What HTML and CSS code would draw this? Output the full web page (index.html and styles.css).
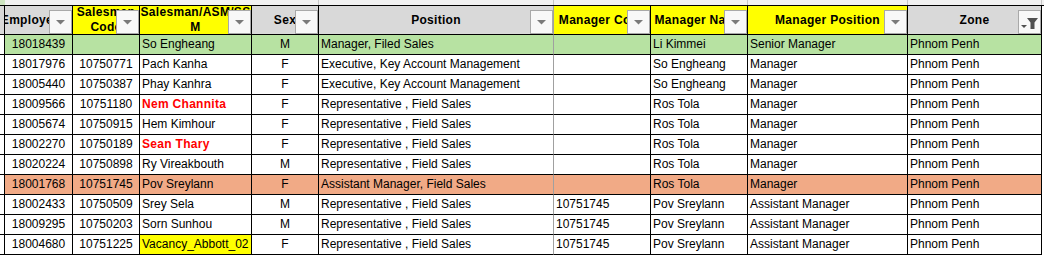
FILE: index.html
```html
<!DOCTYPE html>
<html>
<head>
<meta charset="utf-8">
<link rel="stylesheet" href="styles.css">
</head>
<body>
<div class="sheet">
  <div class="row strip">
    <div class="s s-green"></div><div class="s"></div><div class="s"></div><div class="s"></div><div class="s s-line"></div><div class="s s-line"></div><div class="s"></div><div class="s s-line"></div><div class="s s-line"></div><div class="s s-line"></div>
  </div>
  <div class="row hrow">
    <div class="h gray"></div>
    <div class="h gray"><span class="one">Employee ID</span><span class="fbtn"><svg width="9" height="5" viewBox="0 0 9 5"><polygon points="0,0 9,0 4.5,4.5" fill="#7a7a7a"/></svg></span></div>
    <div class="h yel"><span class="two">Salesman<br>Code</span><span class="fbtn"><svg width="9" height="5" viewBox="0 0 9 5"><polygon points="0,0 9,0 4.5,4.5" fill="#7a7a7a"/></svg></span></div>
    <div class="h yel"><span class="two">Salesman/ASM/SS<br>M</span><span class="fbtn"><svg width="9" height="5" viewBox="0 0 9 5"><polygon points="0,0 9,0 4.5,4.5" fill="#7a7a7a"/></svg></span></div>
    <div class="h gray"><span class="one">Sex</span><span class="fbtn"><svg width="9" height="5" viewBox="0 0 9 5"><polygon points="0,0 9,0 4.5,4.5" fill="#7a7a7a"/></svg></span></div>
    <div class="h gray soft"><span class="one">Position</span><span class="fbtn"><svg width="9" height="5" viewBox="0 0 9 5"><polygon points="0,0 9,0 4.5,4.5" fill="#7a7a7a"/></svg></span></div>
    <div class="h yel"><span class="one">Manager Code</span><span class="fbtn"><svg width="9" height="5" viewBox="0 0 9 5"><polygon points="0,0 9,0 4.5,4.5" fill="#7a7a7a"/></svg></span></div>
    <div class="h yel"><span class="one">Manager Name</span><span class="fbtn"><svg width="9" height="5" viewBox="0 0 9 5"><polygon points="0,0 9,0 4.5,4.5" fill="#7a7a7a"/></svg></span></div>
    <div class="h yel"><span class="one">Manager Position</span><span class="fbtn"><svg width="9" height="5" viewBox="0 0 9 5"><polygon points="0,0 9,0 4.5,4.5" fill="#7a7a7a"/></svg></span></div>
    <div class="h gray"><span class="one">Zone</span><span class="fbtn"><svg width="21" height="22" viewBox="0 0 21 22"><polygon points="8,7 19,7 15.5,11.5 15.5,18 11.5,18 11.5,11.5" fill="#505050"/><polygon points="2,14 8,14 5,17" fill="#505050"/></svg></span></div>
  </div>

  <div class="row drow green">
    <div class="c sp"></div><div class="c ctr">18018439</div><div class="c ctr"></div><div class="c">So Engheang</div><div class="c ctr">M</div><div class="c soft">Manager, Filed Sales</div><div class="c"></div><div class="c">Li Kimmei</div><div class="c">Senior Manager</div><div class="c">Phnom Penh</div>
  </div>
  <div class="row drow">
    <div class="c sp"></div><div class="c ctr">18017976</div><div class="c ctr">10750771</div><div class="c">Pach Kanha</div><div class="c ctr">F</div><div class="c soft">Executive, Key Account Management</div><div class="c"></div><div class="c">So Engheang</div><div class="c">Manager</div><div class="c">Phnom Penh</div>
  </div>
  <div class="row drow">
    <div class="c sp"></div><div class="c ctr">18005440</div><div class="c ctr">10750387</div><div class="c">Phay Kanhra</div><div class="c ctr">F</div><div class="c soft">Executive, Key Account Management</div><div class="c"></div><div class="c">So Engheang</div><div class="c">Manager</div><div class="c">Phnom Penh</div>
  </div>
  <div class="row drow">
    <div class="c sp"></div><div class="c ctr">18009566</div><div class="c ctr">10751180</div><div class="c red">Nem Channita</div><div class="c ctr">F</div><div class="c soft">Representative , Field Sales</div><div class="c"></div><div class="c">Ros Tola</div><div class="c">Manager</div><div class="c">Phnom Penh</div>
  </div>
  <div class="row drow">
    <div class="c sp"></div><div class="c ctr">18005674</div><div class="c ctr">10750915</div><div class="c">Hem Kimhour</div><div class="c ctr">F</div><div class="c soft">Representative , Field Sales</div><div class="c"></div><div class="c">Ros Tola</div><div class="c">Manager</div><div class="c">Phnom Penh</div>
  </div>
  <div class="row drow">
    <div class="c sp"></div><div class="c ctr">18002270</div><div class="c ctr">10750189</div><div class="c red">Sean Thary</div><div class="c ctr">F</div><div class="c soft">Representative , Field Sales</div><div class="c"></div><div class="c">Ros Tola</div><div class="c">Manager</div><div class="c">Phnom Penh</div>
  </div>
  <div class="row drow">
    <div class="c sp"></div><div class="c ctr">18020224</div><div class="c ctr">10750898</div><div class="c">Ry Vireakbouth</div><div class="c ctr">M</div><div class="c soft">Representative , Field Sales</div><div class="c"></div><div class="c">Ros Tola</div><div class="c">Manager</div><div class="c">Phnom Penh</div>
  </div>
  <div class="row drow orange">
    <div class="c sp"></div><div class="c ctr">18001768</div><div class="c ctr">10751745</div><div class="c">Pov Sreylann</div><div class="c ctr">F</div><div class="c soft">Assistant Manager, Field Sales</div><div class="c"></div><div class="c">Ros Tola</div><div class="c">Manager</div><div class="c">Phnom Penh</div>
  </div>
  <div class="row drow">
    <div class="c sp"></div><div class="c ctr">18002433</div><div class="c ctr">10750509</div><div class="c">Srey Sela</div><div class="c ctr">M</div><div class="c soft">Representative , Field Sales</div><div class="c">10751745</div><div class="c">Pov Sreylann</div><div class="c">Assistant Manager</div><div class="c">Phnom Penh</div>
  </div>
  <div class="row drow">
    <div class="c sp"></div><div class="c ctr">18009295</div><div class="c ctr">10750203</div><div class="c">Sorn Sunhou</div><div class="c ctr">M</div><div class="c soft">Representative , Field Sales</div><div class="c">10751745</div><div class="c">Pov Sreylann</div><div class="c">Assistant Manager</div><div class="c">Phnom Penh</div>
  </div>
  <div class="row drow">
    <div class="c sp"></div><div class="c ctr">18004680</div><div class="c ctr">10751225</div><div class="c vac">Vacancy_Abbott_02</div><div class="c ctr">F</div><div class="c soft">Representative , Field Sales</div><div class="c">10751745</div><div class="c">Pov Sreylann</div><div class="c">Assistant Manager</div><div class="c">Phnom Penh</div>
  </div>
</div>
</body>
</html>
```

FILE: styles.css
```css
body {
  margin: 0;
  background: #ffffff;
  font-family: "Liberation Sans", Arial, sans-serif;
  font-size: 12px;
  color: #000000;
}

.sheet {
  width: 1044px;
  height: 256px;
  overflow: hidden;
}

.row {
  display: grid;
  grid-template-columns: 5px 68px 67px 112px 67px 235px 97px 97px 160px 134px;
}

/* strip of the row above */
.strip {
  height: 5px;
  background: #f2f2f2;
}
.s {
  box-sizing: border-box;
  height: 5px;
}
.s-line {
  border-right: 1px solid #c6c6c6;
}
.s-green {
  background: #cfe6c2;
}

/* header */
.hrow {
  border-top: 1px solid #000000;
}
.h {
  position: relative;
  box-sizing: border-box;
  height: 29px;
  border-right: 1px solid #000000;
  border-bottom: 1px solid #000000;
  display: flex;
  align-items: center;
  justify-content: center;
  overflow: hidden;
  font-weight: bold;
  letter-spacing: 0.3px;
  line-height: 15px;
  text-align: center;
}
.gray {
  background: #d9d9d9;
}
.yel {
  background: #ffff00;
}
.h.soft {
  border-right-color: #a0a0a0;
}
.one {
  white-space: nowrap;
  flex: 0 0 auto;
}
.two {
  white-space: nowrap;
  flex: 0 0 auto;
}

.fbtn {
  position: absolute;
  right: 0;
  bottom: 0;
  width: 23px;
  height: 24px;
  box-sizing: border-box;
  border: 1px solid #a9a9a9;
  background: #f8f8f8;
  display: flex;
  align-items: center;
  justify-content: center;
}
.fbtn svg {
  display: block;
}

/* data */
.c {
  box-sizing: border-box;
  height: 20px;
  line-height: 19px;
  border-right: 1px solid #000000;
  border-bottom: 1px solid #000000;
  white-space: nowrap;
  overflow: hidden;
  padding: 0 2px;
}
.c.soft {
  border-right-color: #a0a0a0;
}
.ctr {
  text-align: center;
}
.green .c {
  background: #b7e2a2;
}
.orange .c {
  background: #f1aa86;
}
.drow .c.sp {
  background: #ffffff;
}
.red {
  color: #ff0000;
  font-weight: bold;
  letter-spacing: 0.3px;
}
.drow .c.vac {
  background: #ffff00;
}
```
